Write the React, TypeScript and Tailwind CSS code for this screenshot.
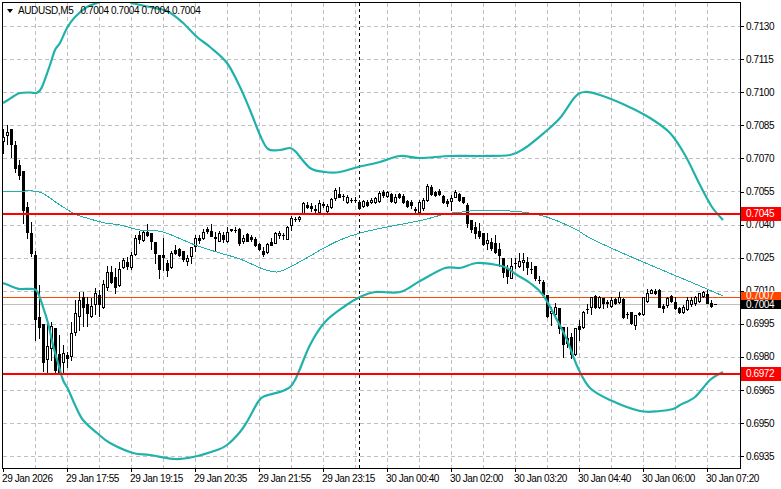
const TEAL = "#20b2aa";

// candles in page pixels, x = 3 + 4 * index: [high, bodyTop, bodyBottom, low, white?]
const candles: [number, number, number, number, number][] = [
  [129, 137, 141, 153, 1], [125, 132, 135, 144, 1], [129, 129, 144, 157, 0], [141, 145, 168, 172, 0],
  [160, 165, 175, 179, 0], [171, 171, 210, 223, 0], [202, 207, 232, 238, 0], [222, 233, 253, 256, 0],
  [251, 255, 319, 340, 0], [285, 317, 327, 338, 0], [324, 324, 362, 371, 0], [320, 346, 359, 372, 1],
  [322, 326, 348, 360, 1], [328, 328, 370, 374, 0], [335, 354, 372, 374, 0], [345, 353, 362, 374, 1],
  [352, 355, 358, 367, 0], [322, 333, 356, 360, 1], [300, 313, 332, 335, 1], [292, 300, 316, 330, 1],
  [292, 297, 307, 326, 0], [297, 304, 313, 326, 0], [298, 306, 316, 317, 1], [288, 293, 304, 314, 1],
  [290, 295, 304, 316, 0], [280, 284, 307, 308, 1], [266, 272, 287, 290, 1], [266, 272, 282, 283, 0],
  [268, 277, 287, 293, 0], [262, 269, 285, 286, 1], [258, 260, 267, 268, 1], [257, 262, 266, 269, 0],
  [252, 255, 267, 269, 1], [235, 238, 254, 255, 1], [231, 235, 239, 243, 0], [230, 232, 240, 241, 1],
  [224, 232, 235, 236, 0], [233, 233, 241, 249, 0], [242, 242, 253, 263, 0], [255, 255, 269, 278, 0],
  [238, 255, 257, 270, 0], [260, 263, 270, 276, 0], [251, 253, 267, 268, 1], [245, 250, 253, 254, 0],
  [248, 249, 255, 256, 0], [251, 251, 259, 261, 0], [255, 258, 261, 265, 1], [247, 247, 256, 263, 1],
  [235, 238, 246, 251, 1], [235, 238, 240, 243, 0], [229, 232, 238, 239, 1], [227, 229, 231, 233, 0],
  [224, 231, 236, 236, 0], [232, 237, 238, 250, 0], [231, 233, 241, 241, 1], [232, 235, 239, 242, 0],
  [227, 232, 241, 242, 1], [229, 229, 230, 231, 0], [227, 230, 230, 232, 0], [228, 229, 243, 245, 0],
  [235, 238, 241, 243, 1], [233, 234, 241, 241, 0], [235, 237, 239, 241, 0], [237, 239, 245, 246, 0],
  [243, 244, 249, 250, 0], [247, 251, 254, 256, 0], [243, 244, 252, 253, 1], [238, 242, 245, 245, 0],
  [232, 233, 243, 243, 1], [231, 233, 235, 238, 1], [233, 235, 235, 239, 0], [226, 227, 239, 239, 1],
  [216, 218, 225, 230, 1], [217, 219, 219, 221, 0], [216, 217, 219, 221, 1], [202, 203, 213, 213, 1],
  [202, 205, 207, 208, 0], [203, 206, 208, 211, 0], [205, 209, 210, 213, 0], [200, 203, 212, 213, 1],
  [202, 204, 205, 207, 0], [204, 206, 211, 212, 1], [198, 199, 207, 208, 1], [188, 190, 198, 200, 1],
  [187, 194, 197, 197, 0], [194, 196, 196, 200, 0], [195, 197, 202, 203, 1], [198, 200, 200, 202, 0],
  [197, 200, 200, 202, 0], [200, 202, 208, 209, 0], [200, 201, 206, 207, 1], [200, 202, 205, 206, 0],
  [198, 200, 202, 203, 1], [197, 198, 202, 203, 1], [191, 193, 201, 202, 1], [190, 192, 195, 197, 0],
  [191, 192, 196, 197, 1], [193, 194, 201, 202, 0], [194, 197, 202, 203, 1], [193, 194, 197, 198, 0],
  [194, 196, 202, 203, 0], [200, 201, 206, 207, 0], [200, 202, 205, 208, 0], [207, 209, 210, 212, 0],
  [200, 202, 212, 213, 1], [198, 200, 208, 210, 1], [184, 186, 200, 201, 1], [185, 187, 194, 195, 0],
  [191, 192, 195, 196, 0], [189, 191, 194, 195, 0], [195, 196, 202, 203, 0], [199, 201, 203, 206, 0],
  [195, 198, 201, 210, 1], [190, 192, 197, 197, 1], [193, 194, 200, 201, 0], [197, 197, 202, 203, 0],
  [203, 205, 223, 227, 0], [220, 220, 229, 232, 0], [222, 227, 233, 238, 0], [223, 231, 236, 238, 0],
  [233, 233, 244, 245, 0], [233, 240, 243, 249, 1], [238, 242, 248, 250, 0], [235, 243, 252, 253, 0],
  [243, 249, 255, 266, 0], [258, 258, 272, 277, 0], [265, 269, 276, 283, 0], [258, 266, 278, 278, 1],
  [258, 263, 263, 268, 0], [253, 261, 266, 267, 1], [253, 260, 262, 270, 1], [257, 262, 267, 274, 0],
  [262, 269, 269, 273, 0], [266, 266, 278, 280, 0], [276, 280, 280, 283, 0], [280, 282, 294, 297, 0],
  [295, 295, 316, 317, 0], [307, 311, 313, 325, 1], [303, 307, 314, 315, 1], [308, 308, 328, 333, 0],
  [327, 327, 344, 357, 0], [327, 338, 343, 347, 0], [333, 337, 354, 358, 0], [328, 328, 354, 355, 1],
  [320, 326, 329, 340, 0], [311, 312, 327, 328, 1], [304, 309, 309, 313, 0], [297, 297, 307, 314, 1],
  [295, 296, 307, 308, 0], [296, 297, 307, 308, 1], [298, 298, 303, 308, 0], [300, 302, 303, 307, 0],
  [297, 300, 306, 307, 1], [298, 299, 303, 304, 0], [292, 297, 302, 303, 1], [298, 299, 317, 318, 0],
  [312, 314, 314, 318, 0], [312, 312, 323, 324, 0], [315, 315, 325, 329, 1], [312, 313, 314, 315, 0],
  [297, 297, 314, 315, 1], [289, 293, 301, 302, 1], [289, 290, 293, 293, 1], [289, 291, 293, 294, 0],
  [289, 290, 307, 307, 0], [304, 306, 308, 312, 0], [297, 298, 305, 307, 1], [295, 296, 301, 302, 0],
  [297, 302, 308, 309, 0], [307, 308, 312, 313, 0], [305, 307, 312, 313, 1], [297, 300, 309, 310, 1],
  [297, 300, 304, 306, 1], [296, 297, 303, 305, 1], [293, 293, 301, 302, 1], [291, 292, 296, 297, 1],
  [290, 294, 303, 303, 0], [300, 303, 306, 307, 0], [304, 304, 304, 304, 0],
];

const upperBand = "3,103 8,100 14,96 20,93 30,92.5 37,92.7 42,87 50,65 55,50 60,43 67,28 75,17 87,7 100,2 112,-2 120,-3 128,0 132,3 150,7 167,11 182,22 197,37 210,47 227,63 240,87 250,110 260,135 268,149 280,150 290,148 296,152 310,168 325,172 340,172 358,167 380,162 400,156 420,158 450,156 480,156 510,155 525,148 545,132 560,118 575,97 585,92 600,95 625,105 650,118 670,133 685,155 700,185 712,207 723,220";
const middleBand = "3,191 25,191 33,191 42,193 50,198 60,205 75,214 90,219 105,223 120,225 140,230 163,232 195,245 220,253 240,259 263,269 277,272 290,267 310,256 322,249 340,240 360,233 387,227 423,220 445,214 462,212 483,210 522,212 543,216 560,222 577,230 590,238 620,252 662,270 693,283 723,296";
const lowerBand = "3,283 13,287 20,289 33,289 38,293 43,307 48,323 53,345 58,363 63,380 68,389 75,405 83,420 97,433 110,443 133,453 150,455 175,459 193,457 217,450 227,445 240,432 248,420 258,402 265,396 285,390 295,380 310,345 325,322 345,306 360,297 375,292 400,292 420,281 445,268 460,268 477,263 497,265 507,268 517,275 530,283 543,295 557,320 567,340 578,368 590,388 610,400 640,411 660,411 673,409 680,405 695,397 710,380 723,372";

const hGrid = [26, 59, 92, 125, 158, 191, 225, 258, 291, 324, 357, 390, 423, 456];
const vGrid = Array.from({ length: 22 }, (_, i) => 35 + i * 32);
const prices = ["0.7130", "0.7115", "0.7100", "0.7085", "0.7070", "0.7055", "0.7040", "0.7025", "0.7010", "0.6995", "0.6980", "0.6965", "0.6950", "0.6935"];
const times = ["29 Jan 2026", "29 Jan 17:55", "29 Jan 19:15", "29 Jan 20:35", "29 Jan 21:55", "29 Jan 23:15", "30 Jan 00:40", "30 Jan 02:00", "30 Jan 03:20", "30 Jan 04:40", "30 Jan 06:00", "30 Jan 07:20"];

// smooth the hand-read band points (catmull-rom to bezier)
function smooth(points: string) {
  const p = points.split(" ").map((s) => s.split(",").map(Number));
  let d = `M${p[0][0]} ${p[0][1]}`;
  for (let i = 0; i < p.length - 1; i++) {
    const a = p[Math.max(i - 1, 0)];
    const b = p[i];
    const c = p[i + 1];
    const e = p[Math.min(i + 2, p.length - 1)];
    d += ` C${b[0] + (c[0] - a[0]) / 6} ${b[1] + (c[1] - a[1]) / 6} ${c[0] - (e[0] - b[0]) / 6} ${c[1] - (e[1] - b[1]) / 6} ${c[0]} ${c[1]}`;
  }
  return d;
}

function Candle({ index, data }: { index: number; data: [number, number, number, number, number] }) {
  const x = 3 + index * 4;
  const [high, top, bottom, low, white] = data;
  return (
    <g>
      <rect x={x} y={high} width={1} height={low - high + 1} fill="#000" />
      <rect x={x - 1} y={top} width={3} height={bottom - top + 1} fill="#000" />
      {white === 1 && bottom - top > 1 && <rect x={x} y={top + 1} width={1} height={bottom - top - 1} fill="#fff" />}
    </g>
  );
}

function Chart() {
  return (
    <svg className="block w-full h-full" viewBox="3 3 737 465" shapeRendering="crispEdges">
      {hGrid.map((y) => (
        <line key={y} x1={3} x2={740} y1={y + 0.5} y2={y + 0.5} stroke="#c0c0c0" strokeDasharray="4 3" />
      ))}
      {vGrid.map((x) => (
        <line key={x} x1={x + 0.5} x2={x + 0.5} y1={3} y2={468} stroke="#c0c0c0" strokeDasharray="4 3" />
      ))}
      {/* ask / bid lines */}
      <rect x={3} y={297} width={737} height={1} fill="#ff4500" />
      <rect x={3} y={304} width={737} height={1} fill="#c0c0c0" />
      {/* crosshair */}
      <line x1={359.5} x2={359.5} y1={3} y2={468} stroke="#000" strokeDasharray="3 3" />
      {candles.map((c, i) => (
        <Candle key={i} index={i} data={c} />
      ))}
      <g fill="none" stroke={TEAL}>
        <path d={smooth(upperBand)} strokeWidth={2.2} shapeRendering="auto" />
        <path d={smooth(middleBand)} strokeWidth={1} />
        <path d={smooth(lowerBand)} strokeWidth={2.2} shapeRendering="auto" />
      </g>
      {/* horizontal levels */}
      <rect x={3} y={213} width={737} height={2} fill="#ff0000" />
      <rect x={3} y={373} width={737} height={2} fill="#ff0000" />
    </svg>
  );
}

function PriceTag({ text, className }: { text: string; className: string }) {
  return <div className={`absolute left-[741px] w-[40px] pl-[5px] flex items-center text-white ${className}`}>{text}</div>;
}

export default function App() {
  return (
    <div className="relative w-[781px] h-[489px] bg-white overflow-hidden pl-[2px] pt-[2px] text-black text-[10px] tracking-[-0.4px] leading-none font-['Liberation_Sans',Arial,sans-serif]">
      <div className="flex h-[467px]">
        <div className="relative w-[739px] h-[467px] border border-black shrink-0">
          <Chart />
          {/* symbol legend */}
          <div className="absolute left-[4px] top-[3px] flex items-center gap-[5px] whitespace-pre">
            <span className="w-0 h-0 border-x-[3.5px] border-x-transparent border-t-[4px] border-t-black" />
            <span>AUDUSD,M5   0.7004 0.7004 0.7004 0.7004</span>
          </div>
        </div>
        {/* price axis */}
        <div className="flex flex-col pt-[8px] w-[40px]">
          {prices.map((p) => (
            <div key={p} className="h-[33.1px] shrink-0 flex items-center">
              <span className="w-[3px] h-px bg-black mr-[2px]" />
              <span>{p}</span>
            </div>
          ))}
        </div>
      </div>
      {/* time axis */}
      <div className="flex pl-px">
        {times.map((t) => (
          <div key={t} className="w-[64px] shrink-0 flex flex-col items-start">
            <span className="w-px h-[3px] bg-black" />
            <span className="-ml-px mt-[2px] whitespace-nowrap">{t}</span>
          </div>
        ))}
      </div>
      <PriceTag text="0.7045" className="top-[207px] h-[14px] bg-[#ff0000]" />
      <PriceTag text="0.7007" className="top-[292px] h-[8px] bg-[#ff4500]" />
      <PriceTag text="0.7004" className="top-[300px] h-[9px] bg-black" />
      <PriceTag text="0.6972" className="top-[367px] h-[14px] bg-[#ff0000]" />
    </div>
  );
}
